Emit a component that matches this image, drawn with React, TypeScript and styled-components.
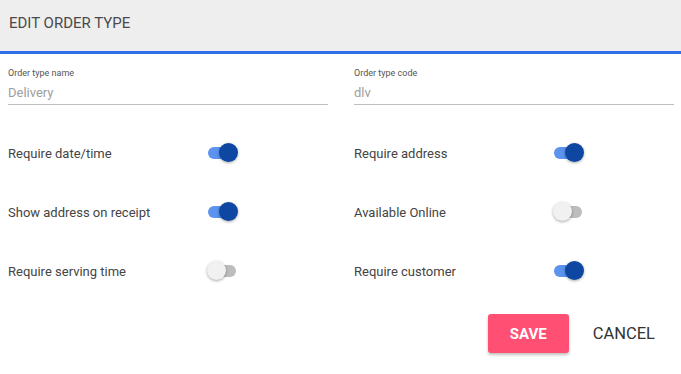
import React from 'react';
import styled, { createGlobalStyle } from 'styled-components';

const GlobalStyle = createGlobalStyle`
	html, body {
		margin: 0;
		padding: 0;
		background: #fff;
		font-family: Roboto, "Liberation Sans", Arial, sans-serif;
	}
`;

const fields = [
	{ label: 'Order type name', value: 'Delivery' },
	{ label: 'Order type code', value: 'dlv' },
];

const toggles = [
	{ label: 'Require date/time', on: true },
	{ label: 'Require address', on: true },
	{ label: 'Show address on receipt', on: true },
	{ label: 'Available Online', on: false },
	{ label: 'Require serving time', on: false },
	{ label: 'Require customer', on: true },
];

const App = () => {
	return (
		<>
			<GlobalStyle />
			<Dialog>
				<Header>EDIT ORDER TYPE</Header>
				<Body>
					<Grid>
						{fields.map((f) => (
							<Field key={f.label}>
								<FieldLabel>{f.label}</FieldLabel>
								<FieldValue>{f.value}</FieldValue>
							</Field>
						))}
					</Grid>
					<ToggleGrid>
						{toggles.map((t) => (
							<ToggleRow key={t.label}>
								<ToggleLabel>{t.label}</ToggleLabel>
								<Switch $on={t.on}>
									<Thumb $on={t.on} />
								</Switch>
							</ToggleRow>
						))}
					</ToggleGrid>
					<Actions>
						<SaveButton>SAVE</SaveButton>
						<CancelButton>CANCEL</CancelButton>
					</Actions>
				</Body>
			</Dialog>
		</>
	);
};

export default App;

const Dialog = styled.div`
	width: 681px;
	height: 374px;
	background: #fff;
	overflow: hidden;
`;

const Header = styled.div`
	height: 54px;
	box-sizing: border-box;
	padding: 0 9px 5px;
	display: flex;
	align-items: center;
	background: #eeeeee;
	border-bottom: 3px solid #2f6fe8;
	color: #4a4a4a;
	font-size: 15px;
`;

const Body = styled.div`
	padding: 13px 7px 0 8px;
`;

const Grid = styled.div`
	display: grid;
	grid-template-columns: 320px 320px;
	column-gap: 26px;
`;

const Field = styled.div`
	display: flex;
	flex-direction: column;
	border-bottom: 1px solid #bdbdbd;
	padding-bottom: 3px;
`;

const FieldLabel = styled.div`
	font-size: 9px;
	color: #555;
	line-height: 12px;
`;

const FieldValue = styled.div`
	font-size: 13px;
	color: #9e9e9e;
	line-height: 16px;
	margin-top: 6px;
`;

const ToggleGrid = styled.div`
	display: grid;
	grid-template-columns: 320px 320px;
	column-gap: 26px;
	margin-top: 36px;
	row-gap: 35px;
`;

const ToggleRow = styled.div`
	display: flex;
	align-items: center;
	height: 24px;
`;

const ToggleLabel = styled.div`
	width: 200px;
	font-size: 13px;
	color: #444;
`;

const Switch = styled.div<{ $on: boolean }>`
	position: relative;
	width: 28px;
	height: 12px;
	border-radius: 6px;
	background: ${(p) => (p.$on ? '#5b93ef' : '#bdbdbd')};
`;

const Thumb = styled.div<{ $on: boolean }>`
	position: absolute;
	top: -4px;
	left: ${(p) => (p.$on ? '11px' : '-1px')};
	width: 19px;
	height: 19px;
	border-radius: 50%;
	background: ${(p) => (p.$on ? '#0d47a1' : '#f1f1f1')};
	box-shadow: 0 1px 3px rgba(0, 0, 0, 0.35);
`;

const Actions = styled.div`
	display: flex;
	justify-content: flex-end;
	align-items: center;
	gap: 10px;
	margin-top: 31px;
	padding-right: 5px;
`;

const SaveButton = styled.button`
	width: 81px;
	height: 39px;
	border: none;
	border-radius: 3px;
	background: #ff4f72;
	color: #fff;
	font-family: inherit;
	font-weight: 700;
	font-size: 15px;
	box-shadow: 0 2px 3px rgba(0, 0, 0, 0.25);
`;

const CancelButton = styled.button`
	height: 39px;
	padding: 0 14px;
	border: none;
	background: transparent;
	color: #333;
	font-family: inherit;
	font-size: 16.5px;
`;
